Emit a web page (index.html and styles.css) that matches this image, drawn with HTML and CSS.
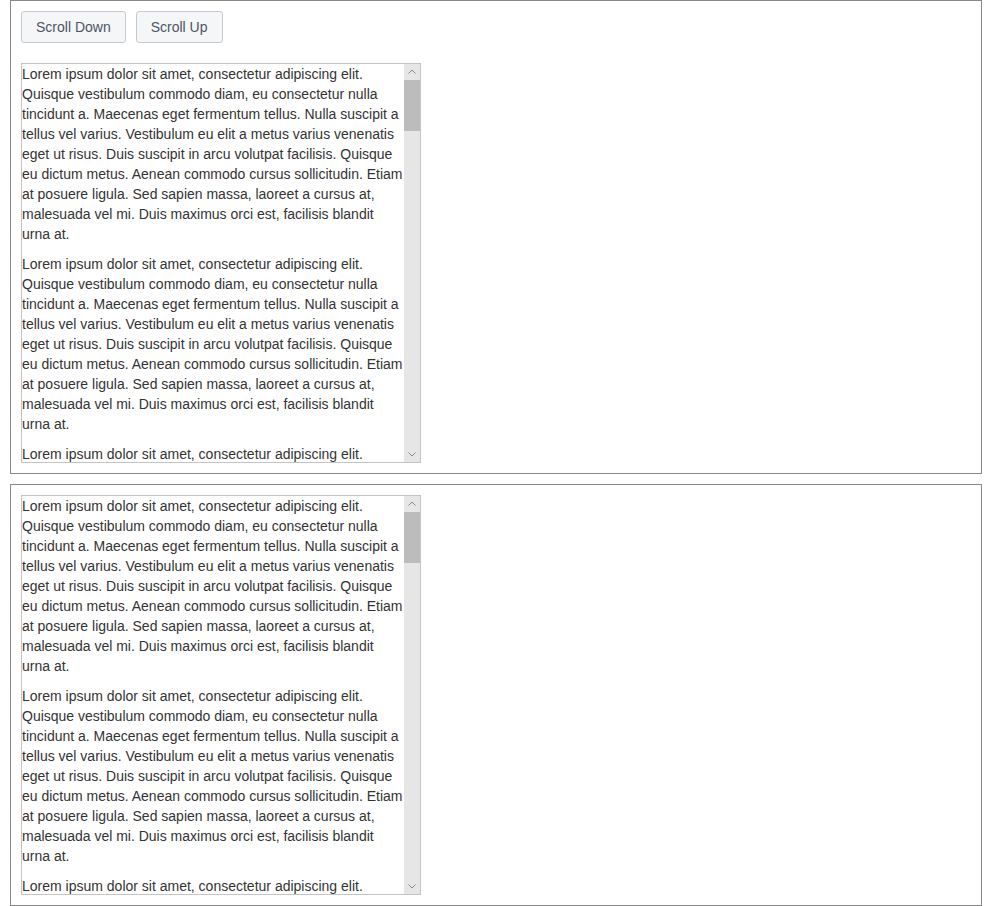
FILE: index.html
```html
<!DOCTYPE html>
<html>
<head>
<meta charset="utf-8">
<link rel="stylesheet" href="styles.css">
</head>
<body>
<div class="panel">
  <div class="toolbar">
    <button class="btn">Scroll Down</button>
    <button class="btn">Scroll Up</button>
  </div>
  <div class="scroller">
    <div class="content">
      <p>Lorem ipsum dolor sit amet, consectetur adipiscing elit. Quisque vestibulum commodo diam, eu consectetur nulla tincidunt a. Maecenas eget fermentum tellus. Nulla suscipit a tellus vel varius. Vestibulum eu elit a metus varius venenatis eget ut risus. Duis suscipit in arcu volutpat facilisis. Quisque eu dictum metus. Aenean commodo cursus sollicitudin. Etiam at posuere ligula. Sed sapien massa, laoreet a cursus at, malesuada vel mi. Duis maximus orci est, facilisis blandit urna at.</p>
      <p>Lorem ipsum dolor sit amet, consectetur adipiscing elit. Quisque vestibulum commodo diam, eu consectetur nulla tincidunt a. Maecenas eget fermentum tellus. Nulla suscipit a tellus vel varius. Vestibulum eu elit a metus varius venenatis eget ut risus. Duis suscipit in arcu volutpat facilisis. Quisque eu dictum metus. Aenean commodo cursus sollicitudin. Etiam at posuere ligula. Sed sapien massa, laoreet a cursus at, malesuada vel mi. Duis maximus orci est, facilisis blandit urna at.</p>
      <p>Lorem ipsum dolor sit amet, consectetur adipiscing elit. Quisque vestibulum commodo diam, eu consectetur nulla tincidunt a.</p>
    </div>
    <div class="sbar">
      <div class="sbtn"><svg width="16" height="16" viewBox="0 0 16 16"><path d="M4.5 9.5 L8 6 L11.5 9.5" fill="none" stroke="#8a8a8a" stroke-width="1"/></svg></div>
      <div class="track"><div class="thumb"></div></div>
      <div class="sbtn"><svg width="16" height="16" viewBox="0 0 16 16"><path d="M4.5 6.5 L8 10 L11.5 6.5" fill="none" stroke="#8a8a8a" stroke-width="1"/></svg></div>
    </div>
  </div>
</div>
<div class="panel panel-second">
  <div class="scroller">
    <div class="content">
      <p>Lorem ipsum dolor sit amet, consectetur adipiscing elit. Quisque vestibulum commodo diam, eu consectetur nulla tincidunt a. Maecenas eget fermentum tellus. Nulla suscipit a tellus vel varius. Vestibulum eu elit a metus varius venenatis eget ut risus. Duis suscipit in arcu volutpat facilisis. Quisque eu dictum metus. Aenean commodo cursus sollicitudin. Etiam at posuere ligula. Sed sapien massa, laoreet a cursus at, malesuada vel mi. Duis maximus orci est, facilisis blandit urna at.</p>
      <p>Lorem ipsum dolor sit amet, consectetur adipiscing elit. Quisque vestibulum commodo diam, eu consectetur nulla tincidunt a. Maecenas eget fermentum tellus. Nulla suscipit a tellus vel varius. Vestibulum eu elit a metus varius venenatis eget ut risus. Duis suscipit in arcu volutpat facilisis. Quisque eu dictum metus. Aenean commodo cursus sollicitudin. Etiam at posuere ligula. Sed sapien massa, laoreet a cursus at, malesuada vel mi. Duis maximus orci est, facilisis blandit urna at.</p>
      <p>Lorem ipsum dolor sit amet, consectetur adipiscing elit. Quisque vestibulum commodo diam, eu consectetur nulla tincidunt a.</p>
    </div>
    <div class="sbar">
      <div class="sbtn"><svg width="16" height="16" viewBox="0 0 16 16"><path d="M4.5 9.5 L8 6 L11.5 9.5" fill="none" stroke="#8a8a8a" stroke-width="1"/></svg></div>
      <div class="track"><div class="thumb"></div></div>
      <div class="sbtn"><svg width="16" height="16" viewBox="0 0 16 16"><path d="M4.5 6.5 L8 10 L11.5 6.5" fill="none" stroke="#8a8a8a" stroke-width="1"/></svg></div>
    </div>
  </div>
</div>
</body>
</html>
```
FILE: styles.css
```css
html, body {
  margin: 0;
  padding: 0;
  background: #fff;
}
body {
  padding: 0 10px;
  font-family: "Liberation Sans", Arial, sans-serif;
  font-size: 14px;
  color: #333;
}
.panel {
  border: 1px solid #888;
  padding: 10px;
  display: flex;
  flex-direction: column;
  gap: 20px;
}
.panel-second {
  margin-top: 10px;
}
.toolbar {
  display: flex;
  gap: 10px;
}
.btn {
  font-family: "Liberation Sans", Arial, sans-serif;
  font-size: 14px;
  color: #4b5563;
  background: #f5f6f8;
  border: 1px solid #c6cad0;
  border-radius: 3px;
  height: 32px;
  padding: 0 14px;
  line-height: 30px;
  margin: 0;
}
.scroller {
  width: 400px;
  height: 400px;
  box-sizing: border-box;
  border: 1px solid #c4c4c4;
  display: flex;
}
.content {
  flex: 1;
  overflow: hidden;
  line-height: 20px;
  color: #333;
}
.content p {
  margin: 0 0 10px 0;
}
.sbar {
  width: 16px;
  flex: none;
  background: #e6e6e6;
  display: flex;
  flex-direction: column;
}
.sbtn {
  height: 16px;
  display: flex;
}
.track {
  flex: 1;
}
.thumb {
  height: 51px;
  background: #bcbcbc;
}
```
